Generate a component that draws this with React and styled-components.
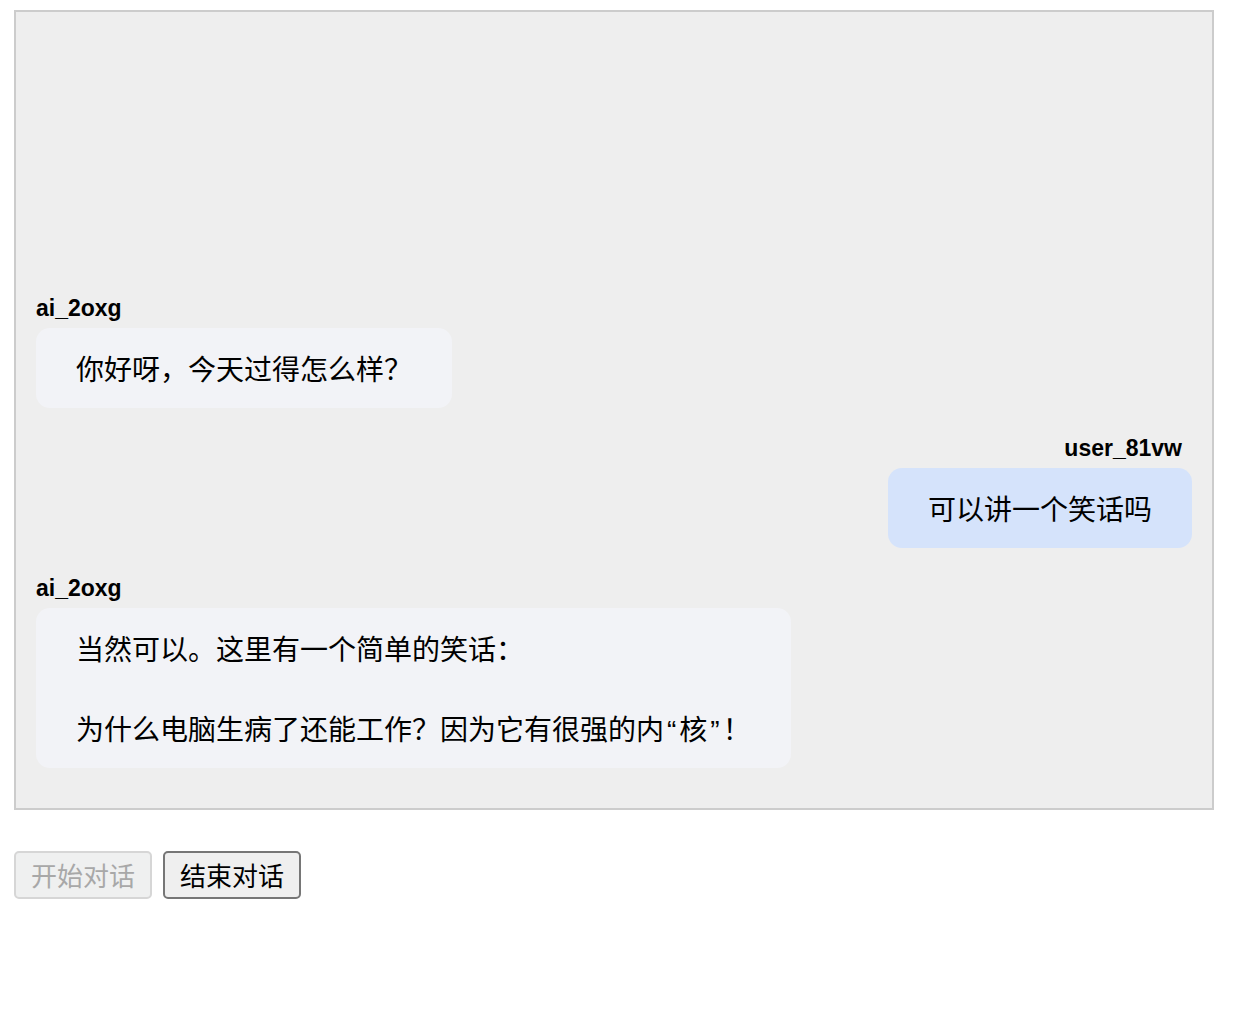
import React from 'react';
import styled, { createGlobalStyle } from 'styled-components';

const GlobalStyle = createGlobalStyle`
  body {
    margin: 10px 14px;
    background: #ffffff;
    font-family: "Liberation Sans", "Noto Sans CJK SC", sans-serif;
    color: #000;
  }
`

const ChatBox = styled.div`
  box-sizing: border-box;
  width: 1200px;
  height: 800px;
  border: 2px solid #cccccc;
  background: #eeeeee;
  padding: 20px;
  display: flex;
  flex-direction: column;
  justify-content: flex-end;
  overflow-y: auto;
`

const Message = styled.div`
  display: flex;
  flex-direction: column;
  align-items: ${p => (p.$mine ? 'flex-end' : 'flex-start')};
  margin-bottom: 20px;
`

const Name = styled.div`
  font-size: 23px;
  font-weight: bold;
  line-height: 30px;
  padding-top: 5px;
  margin-bottom: 5px;
  margin-right: ${p => (p.$mine ? '10px' : '0')};
`

const Bubble = styled.div`
  background: ${p => (p.$mine ? '#d5e3fb' : '#f2f3f7')};
  border-radius: 14px;
  padding: 20px 40px;
  font-family: "Noto Sans CJK SC", "Liberation Sans", sans-serif;
  font-size: 28px;
  line-height: 40px;
  white-space: pre-wrap;
  max-width: 80%;
`

const Quote = styled.span`
  font-family: "Liberation Sans", sans-serif;
  line-height: 1;
  margin: 0 3px;
`

const Controls = styled.div`
  display: flex;
  gap: 11px;
  margin-top: 41px;
`

const Button = styled.button`
  font-family: "Noto Sans CJK SC", sans-serif;
  font-size: 26px;
  line-height: 36px;
  padding: 4px 15px;
  border-radius: 5px;
  border: 2px solid #767676;
  background: #efefef;
  color: #000;
  cursor: pointer;
  &:disabled {
    border-color: #d6d6d6;
    background: #eff0f0;
    color: #a8a8a8;
    cursor: default;
  }
`

const messages = [
  { id: 1, user: 'ai_2oxg', mine: false, text: '你好呀，今天过得怎么样？' },
  { id: 2, user: 'user_81vw', mine: true, text: '可以讲一个笑话吗' },
  {
    id: 3,
    user: 'ai_2oxg',
    mine: false,
    text: '当然可以。这里有一个简单的笑话：\n\n为什么电脑生病了还能工作？因为它有很强的内“核”！',
  },
]

// curly quotes are drawn proportional, as in the original
function renderText(text) {
  return text.split(/([“”])/).map((part, i) =>
    part === '“' || part === '”' ? <Quote key={i}>{part}</Quote> : part
  )
}

export default function App() {
  return (
    <>
      <GlobalStyle />
      <ChatBox>
        {messages.map(m => (
          <Message key={m.id} $mine={m.mine}>
            <Name $mine={m.mine}>{m.user}</Name>
            <Bubble $mine={m.mine}>{renderText(m.text)}</Bubble>
          </Message>
        ))}
      </ChatBox>
      <Controls>
        <Button disabled>开始对话</Button>
        <Button>结束对话</Button>
      </Controls>
    </>
  )
}
